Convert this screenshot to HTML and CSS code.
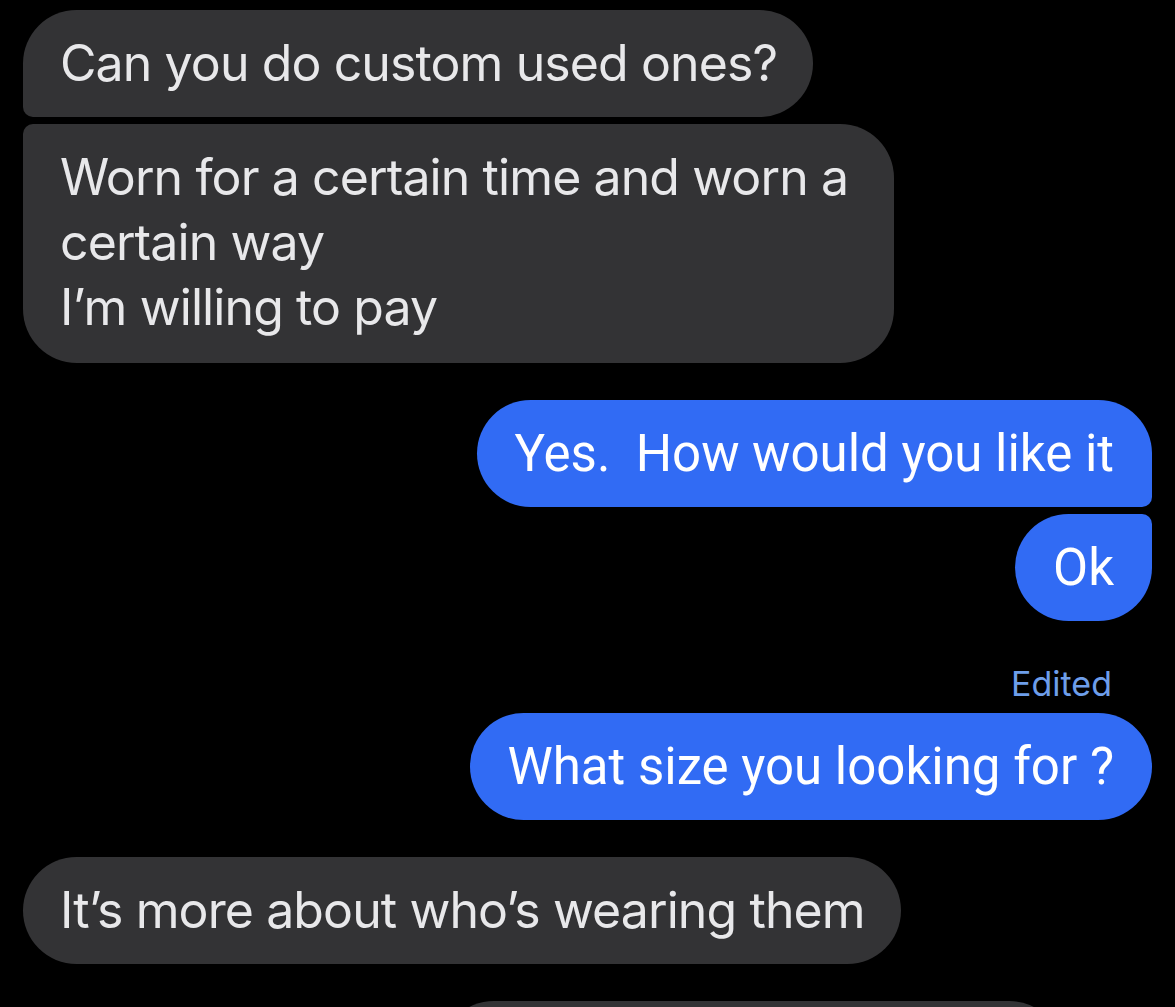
FILE: index.html
```html
<!DOCTYPE html>
<html>
<head>
<meta charset="utf-8">
<link rel="stylesheet" href="styles.css">
</head>
<body>
<div class="thread">
  <div class="row in"><div class="bubble gray first">Can you do custom used ones?</div></div>
  <div class="row in tight"><div class="bubble gray last">Worn for a certain time and worn a<br>certain way<br>I’m willing to pay</div></div>

  <div class="row out gap"><div class="bubble blue ofirst">Yes.&nbsp; How would you like it</div></div>
  <div class="row out tight"><div class="bubble blue olast">Ok</div></div>

  <div class="edited">Edited</div>
  <div class="row out"><div class="bubble blue">What size you looking for ?</div></div>

  <div class="row in gap"><div class="bubble gray">It’s more about who’s wearing them</div></div>

  <div class="row in gap"><div class="bubble gray partial"></div></div>
</div>
</body>
</html>
```

FILE: styles.css
```css
html, body {
  margin: 0;
  padding: 0;
  background: #000;
  height: 100%;
  overflow: hidden;
}

.thread {
  display: flex;
  flex-direction: column;
  padding: 10px 23px 0 23px;
}

.row {
  display: flex;
}

.row.in { justify-content: flex-start; }
.row.out { justify-content: flex-end; }
.row.tight { margin-top: 7px; }
.row.gap { margin-top: 37px; }

.bubble {
  border-radius: 54px;
  white-space: nowrap;
}

.bubble.gray {
  background: #333335;
  color: #e8e8ea;
  font-family: "Inter", "Noto Sans", sans-serif;
  font-size: 50px;
  line-height: 65px;
  padding: 21px 36px 21px 37px;
  letter-spacing: -0.9px;
}

.bubble.gray.first { border-bottom-left-radius: 10px; }
.bubble.gray.last {
  border-top-left-radius: 10px;
  padding-right: 46px;
  padding-bottom: 23px;
}

.bubble.blue {
  background: #316bf4;
  color: #ffffff;
  font-family: "Roboto", "Liberation Sans", sans-serif;
  font-size: 51px;
  line-height: 65px;
  padding: 21px 38px 21px 38px;
}

.bubble.blue.ofirst { border-bottom-right-radius: 10px; }
.bubble.blue.olast { border-top-right-radius: 10px; }

.edited {
  align-self: flex-end;
  margin-top: 44px;
  margin-right: 40px;
  margin-bottom: 10px;
  font-family: "Inter", "Noto Sans", sans-serif;
  font-size: 34px;
  line-height: 38px;
  letter-spacing: 0;
  color: #6e9eea;
}

.bubble.partial {
  margin-left: 417px;
  width: 550px;
  height: 120px;
  border-top-left-radius: 54px;
}
```
